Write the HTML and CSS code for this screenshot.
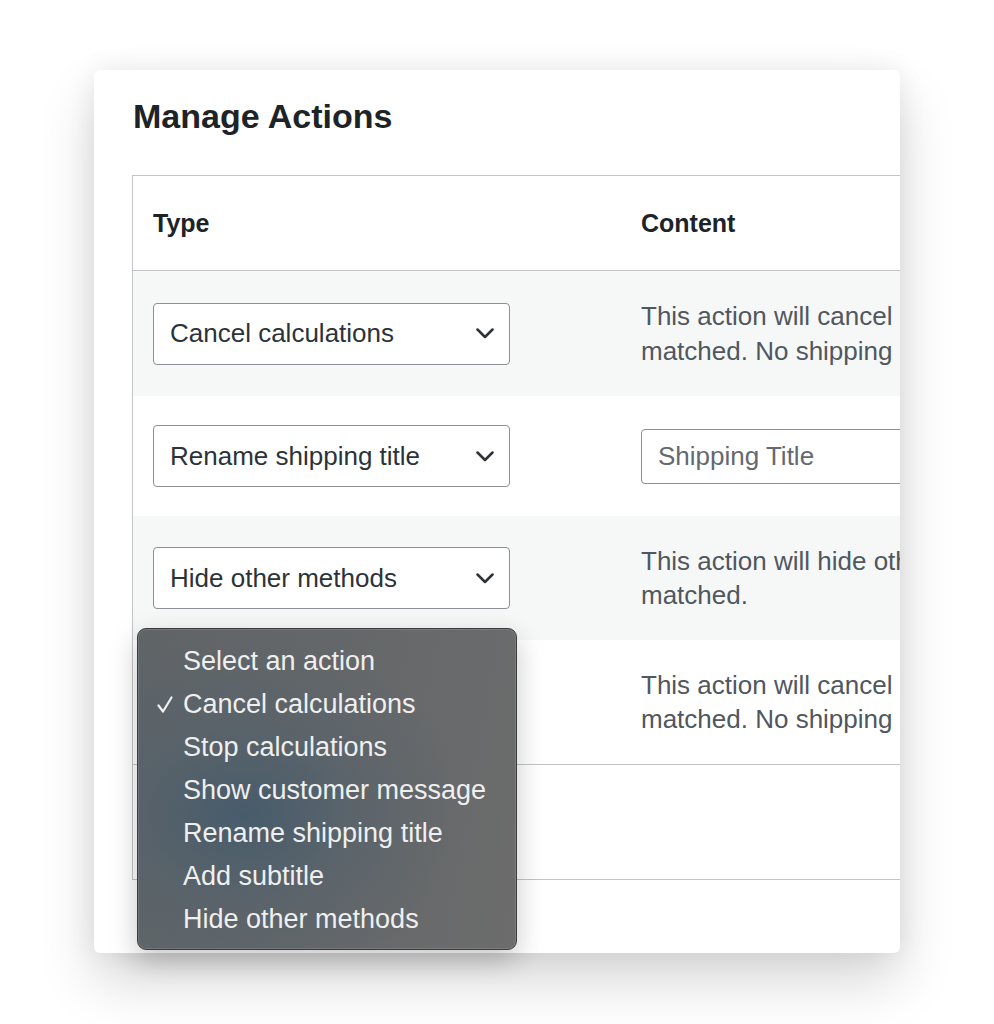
FILE: index.html
```html
<!DOCTYPE html>
<html lang="en">
<head>
<meta charset="utf-8">
<title>Manage Actions</title>
<link rel="stylesheet" href="styles.css">
</head>
<body>
<div class="stage">
  <div class="card">
    <h1 class="title">Manage Actions</h1>
    <table class="actions">
      <colgroup><col class="col-type"><col class="col-content"></colgroup>
      <thead>
        <tr class="head-row"><th>Type</th><th>Content</th></tr>
      </thead>
      <tbody>
        <tr class="row row-1 alt">
          <td>
            <div class="select"><span>Cancel calculations</span><svg class="chev" width="18" height="11" viewBox="0 0 18 11"><polyline points="1.5,1.5 9,9 16.5,1.5" fill="none" stroke="currentColor" stroke-width="2.5" stroke-linecap="round" stroke-linejoin="round"/></svg></div>
          </td>
          <td><p class="desc">This action will cancel all shipping methods if the rule is<br>matched. No shipping methods will be available.</p></td>
        </tr>
        <tr class="row row-2">
          <td>
            <div class="select"><span>Rename shipping title</span><svg class="chev" width="18" height="11" viewBox="0 0 18 11"><polyline points="1.5,1.5 9,9 16.5,1.5" fill="none" stroke="currentColor" stroke-width="2.5" stroke-linecap="round" stroke-linejoin="round"/></svg></div>
          </td>
          <td><input class="text-input" type="text" placeholder="Shipping Title"></td>
        </tr>
        <tr class="row row-3 alt">
          <td>
            <div class="select"><span>Hide other methods</span><svg class="chev" width="18" height="11" viewBox="0 0 18 11"><polyline points="1.5,1.5 9,9 16.5,1.5" fill="none" stroke="currentColor" stroke-width="2.5" stroke-linecap="round" stroke-linejoin="round"/></svg></div>
          </td>
          <td><p class="desc">This action will hide other shipping methods if the rule is<br>matched.</p></td>
        </tr>
        <tr class="row row-4 last">
          <td>
            <div class="select under-menu"><span>Cancel calculations</span><svg class="chev" width="18" height="11" viewBox="0 0 18 11"><polyline points="1.5,1.5 9,9 16.5,1.5" fill="none" stroke="currentColor" stroke-width="2.5" stroke-linecap="round" stroke-linejoin="round"/></svg></div>
          </td>
          <td><p class="desc">This action will cancel all shipping methods if the rule is<br>matched. No shipping methods will be available.</p></td>
        </tr>
      </tbody>
      <tfoot>
        <tr class="foot-row"><td></td><td></td></tr>
      </tfoot>
    </table>
  </div>

  <ul class="menu">
    <li class="item"><span class="check"></span>Select an action</li>
    <li class="item"><span class="check"><svg width="16" height="17" viewBox="0 0 16 17"><polyline points="1.5,9.5 6,15.5 14.5,1.5" fill="none" stroke="currentColor" stroke-width="2.2" stroke-linecap="round" stroke-linejoin="round"/></svg></span>Cancel calculations</li>
    <li class="item"><span class="check"></span>Stop calculations</li>
    <li class="item"><span class="check"></span>Show customer message</li>
    <li class="item"><span class="check"></span>Rename shipping title</li>
    <li class="item"><span class="check"></span>Add subtitle</li>
    <li class="item"><span class="check"></span>Hide other methods</li>
  </ul>
</div>
</body>
</html>
```

FILE: styles.css
```css
html, body {
  margin: 0;
  padding: 0;
  background: #ffffff;
}

body {
  font-family: "Liberation Sans", Arial, Helvetica, sans-serif;
  color: #1d2327;
}

.stage {
  position: relative;
  width: 994px;
  height: 1024px;
  padding: 70px 0 0 94px;
  box-sizing: border-box;
}

.card {
  width: 806px;
  height: 883px;
  box-sizing: border-box;
  padding: 26px 0 0 38px;
  background: #ffffff;
  border-radius: 6px;
  overflow: hidden;
  box-shadow: 0 0 28px rgba(0, 0, 0, 0.07), 0 28px 55px rgba(0, 0, 0, 0.16);
}

.title {
  margin: 0 0 39px 1px;
  font-size: 34px;
  line-height: 40px;
  font-weight: 700;
  color: #1d2327;
}

.actions {
  width: 1000px;
  table-layout: fixed;
  border-collapse: separate;
  border-spacing: 0;
  border: 1px solid #c3c4c7;
}

.col-type {
  width: 488px;
}

.actions th {
  text-align: left;
  font-size: 25px;
  font-weight: 700;
  color: #1d2327;
  padding: 0 20px;
  border-bottom: 1px solid #c3c4c7;
}

.actions td {
  padding: 0 20px;
  vertical-align: middle;
}

.head-row { height: 95px; }
.row-1 { height: 125px; }
.row-2 { height: 120px; }
.row-3 { height: 124px; }
.row-4 { height: 125px; }
.foot-row { height: 114px; }

.alt td {
  background: #f6f7f7;
}

.last td {
  border-bottom: 1px solid #c3c4c7;
}

.select {
  width: 357px;
  height: 62px;
  box-sizing: border-box;
  border: 1px solid #8c8f94;
  border-radius: 4px;
  background: #ffffff;
  display: flex;
  align-items: center;
  justify-content: space-between;
  padding: 0 15px 0 16px;
  font-size: 26px;
  color: #2c3338;
}

.under-menu {
  visibility: hidden;
}

.chev {
  color: #2c3338;
  flex: none;
}

.desc {
  margin: 0;
  font-size: 26px;
  line-height: 34.5px;
  color: #50575e;
  white-space: nowrap;
}

.text-input {
  display: block;
  width: 420px;
  height: 55px;
  box-sizing: border-box;
  border: 1px solid #8c8f94;
  border-radius: 4px;
  padding: 0 16px;
  margin-top: 1px;
  font-family: "Liberation Sans", Arial, sans-serif;
  font-size: 26px;
  color: #2c3338;
  background: #ffffff;
}

.text-input::placeholder {
  color: #646970;
}

.menu {
  position: absolute;
  left: 137px;
  top: 628px;
  width: 380px;
  height: 322px;
  box-sizing: border-box;
  margin: 0;
  padding: 11px 0 10px 0;
  list-style: none;
  border-radius: 9px;
  border: 1px solid #3a3c3d;
  background:
    radial-gradient(ellipse 60% 55% at 28% 58%, rgba(66, 90, 108, 0.85) 0%, rgba(80, 96, 108, 0.45) 50%, rgba(100, 104, 106, 0) 100%),
    linear-gradient(100deg, #5f6467 0%, #646769 45%, #6c6c6c 100%);
  box-shadow: inset 0 0 0 1px rgba(255, 255, 255, 0.12), 0 10px 28px rgba(0, 0, 0, 0.22);
  font-size: 27px;
  color: #efefef;
}

.item {
  display: flex;
  align-items: center;
  height: 43px;
  padding-left: 19px;
  white-space: nowrap;
}

.check {
  flex: none;
  width: 26px;
  height: 17px;
  display: flex;
  align-items: center;
  color: #efefef;
}
```
